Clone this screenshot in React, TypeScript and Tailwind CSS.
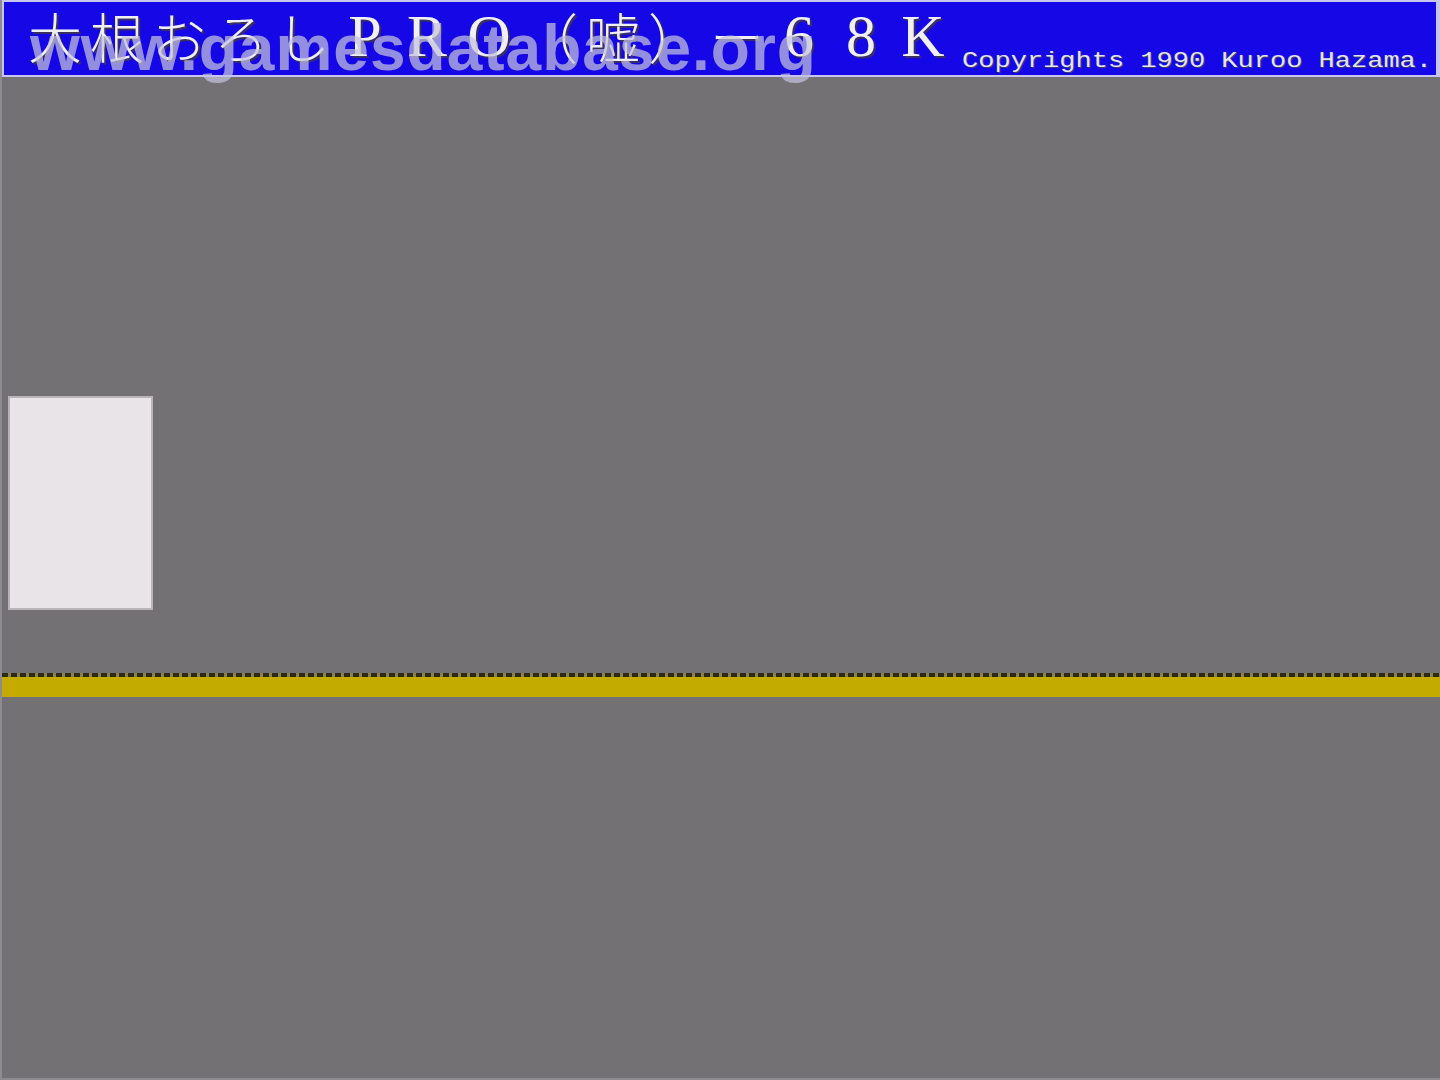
import React from "react";

const titleChars: { c: string; latin?: boolean }[] = [
  { c: "大" },
  { c: "根" },
  { c: "お" },
  { c: "ろ" },
  { c: "し" },
  { c: "P", latin: true },
  { c: "R", latin: true },
  { c: "O", latin: true },
  { c: "（" },
  { c: "嘘" },
  { c: "）" },
  { c: "ー" },
  { c: "6", latin: true },
  { c: "8", latin: true },
  { c: "K", latin: true },
];

export default function App() {
  return (
    <div className="relative w-[1440px] h-[1080px] bg-[#737174] flex flex-col overflow-hidden border-l-2 border-b-2 border-[#8e8c90]">
      {/* Header */}
      <header className="h-[77px] bg-[#1608e6] border-t-2 border-l-2 border-r-4 border-b-2 border-[#c8c4f0] flex items-start">
        <div className="flex shrink-0 pl-[20px] pt-[2px]">
          {titleChars.map((t, i) => (
            <span
              key={i}
              className={
                t.latin
                  ? "w-[62px] h-[64px] flex items-center justify-center text-[60px] leading-none text-[#f0f0f4] [text-shadow:2px_2px_0_#3a3060] [font-family:'Liberation_Serif',serif]"
                  : "w-[62px] h-[64px] flex items-center justify-center text-[54px] leading-none font-light text-[#f0f0f4] [text-shadow:2px_2px_0_#3a3060] [font-family:'Noto_Sans_CJK_JP',sans-serif]"
              }
            >
              {t.c}
            </span>
          ))}
        </div>
        <div className="ml-auto shrink-0 self-end pr-[4px] pb-[2px] text-[27px] leading-[28px] text-[#e4e4f0] [text-shadow:1px_1px_0_#404060] [font-family:'Liberation_Mono',monospace] whitespace-nowrap scale-y-[0.85] origin-bottom">
          Copyrights 1990 Kuroo Hazama.
        </div>
      </header>

      {/* Watermark */}
      <div className="absolute left-[28px] top-[8px] text-[64px] leading-[80px] font-bold tracking-[1px] text-[rgba(196,194,222,0.72)] [font-family:'Liberation_Sans',Arial,sans-serif] whitespace-nowrap pointer-events-none">
        www.gamesdatabase.org
      </div>

      {/* Play field */}
      <main className="flex flex-col">
        <div className="mt-[319px] ml-[6px] w-[145px] h-[214px] bg-[#e8e4e8] border-2 border-[#b8b4b8]" />
        <div className="mt-[63px] h-[4px] bg-[repeating-linear-gradient(90deg,#2e2a1a_0px,#2e2a1a_6px,#8c8248_6px,#8c8248_9px)]" />
        <div className="h-[20px] bg-[#c4ab00]" />
      </main>
    </div>
  );
}
